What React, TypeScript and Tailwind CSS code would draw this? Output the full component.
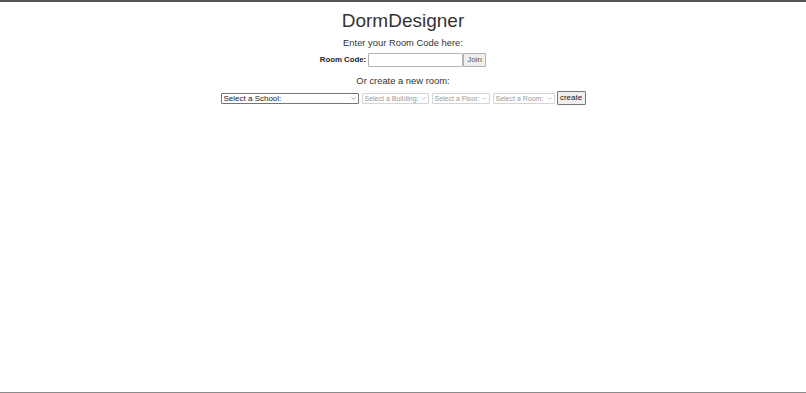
import { ChevronDown } from "lucide-react";

function Picker({
  label,
  width,
  disabled,
}: {
  label: string;
  width: string;
  disabled?: boolean;
}) {
  return (
    <div className={`relative ${width} h-[11px] leading-none`}>
      <select
        disabled={disabled}
        className={[
          "block h-[11px] w-full appearance-none rounded-[1px] border bg-white py-0 pl-[2px] pr-[7px] leading-[9px] outline-none",
          disabled
            ? "border-[#d4d4d4] text-[7px] text-[#9a9a9a]"
            : "border-[#767676] text-[8px] text-[#222]",
        ].join(" ")}
        defaultValue=""
      >
        <option value="">{label}</option>
      </select>
      {/* chevron over the select */}
      <ChevronDown
        className={`pointer-events-none absolute right-[2px] top-[2px] h-[7px] w-[7px] ${
          disabled ? "text-[#a0a0a0]" : "text-[#555]"
        }`}
        strokeWidth={2}
      />
    </div>
  );
}

export default function App() {
  return (
    <div className="flex h-[393px] w-full flex-col items-center border-t-2 border-b border-t-[#555] border-b-[#8a8a8a] bg-white font-['Liberation_Sans',Arial,sans-serif] text-[#333]">
      <h1 className="mt-[8px] text-[19px] leading-[22px]">DormDesigner</h1>
      <p className="mt-[5px] text-[9.4px] leading-[11px]">Enter your Room Code here:</p>

      <div className="mt-[5px] flex items-center">
        <label className="mr-[2px] text-[7.8px] font-bold text-[#222]">Room Code:</label>
        <input
          type="text"
          className="block h-[14px] w-[95px] rounded-[1px] border border-[#b5b5b5] bg-white px-[2px] text-[8px] outline-none"
        />
        <button className="block h-[14px] w-[23px] rounded-[1px] border border-[#b0b0b0] bg-[#efefef] text-[8px] font-normal leading-none text-[#555]">
          Join
        </button>
      </div>

      <p className="mt-[8px] text-[9.4px] leading-[11px]">Or create a new room:</p>

      <div className="mt-[5px] flex items-center gap-[3px]">
        <Picker label="Select a School:" width="w-[138px]" />
        <Picker label="Select a Building:" width="w-[67px]" disabled />
        <Picker label="Select a Floor:" width="w-[58px]" disabled />
        <Picker label="Select a Room:" width="w-[62px]" disabled />
        <button className="ml-[-1px] block h-[14px] w-[29px] rounded-[1px] border border-[#767676] bg-[#efefef] text-[8px] leading-none text-[#222]">
          create
        </button>
      </div>
    </div>
  );
}
